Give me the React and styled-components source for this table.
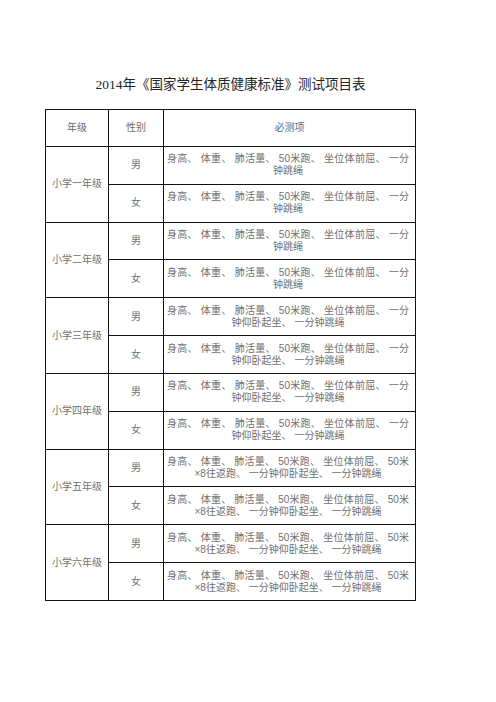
import React from "react";
import styled, { createGlobalStyle } from "styled-components";

const GlobalStyle = createGlobalStyle`
  html, body {
    margin: 0;
    padding: 0;
    background: #ffffff;
  }
  body {
    font-family: "Liberation Sans", "Noto Sans CJK SC", sans-serif;
  }
`;

const Page = styled.div`
  width: 496px;
  min-height: 702px;
  background: #ffffff;
  padding: 75px 0 0 45px;
  box-sizing: border-box;
`;

const Sheet = styled.div`
  width: 371px;
  display: flex;
  flex-direction: column;
  align-items: stretch;
`;

const Title = styled.h1`
  margin: 0 0 14px 0;
  height: 20px;
  line-height: 20px;
  font-size: 13.5px;
  font-weight: 400;
  text-align: center;
  color: #262626;
  font-family: "Liberation Serif", "Noto Sans CJK SC", serif;
  white-space: nowrap;
`;

const Table = styled.div`
  display: grid;
  grid-template-columns: 62px 54px 251px;
  grid-template-rows: 36px repeat(12, 36.83px);
  gap: 1px;
  background: #111111;
  border: 1px solid #111111;
`;

const Cell = styled.div`
  background: #ffffff;
  display: flex;
  align-items: center;
  justify-content: center;
  font-family: "Liberation Sans", "Noto Sans CJK SC", sans-serif;
  font-size: 10px;
  line-height: 12px;
  color: #707070;
  min-width: 0;
`;

const HeaderCell = styled(Cell)`
  color: ${(p) => (p.$accent ? "#4d6a96" : "#6a6a6a")};
`;

const GradeCell = styled(Cell)`
  grid-row: span 2;
`;

const GenderCell = styled(Cell)``;

const ItemsCell = styled(Cell)`
  flex-direction: column;
  align-items: stretch;
  padding: 0 6px 0 3px;
`;

const FirstLine = styled.span`
  display: block;
  height: 12px;
  text-align: justify;
  text-align-last: justify;
  white-space: nowrap;
`;

const SecondLine = styled.span`
  display: block;
  height: 12px;
  text-align: center;
  white-space: nowrap;
`;

const base = "身高、 体重、 肺活量、 50米跑、 坐位体前屈、 ";

const itemsByGrade = [
  [base + "一分", "钟跳绳"],
  [base + "一分", "钟跳绳"],
  [base + "一分", "钟仰卧起坐、 一分钟跳绳"],
  [base + "一分", "钟仰卧起坐、 一分钟跳绳"],
  [base + "50米", "×8往返跑、 一分钟仰卧起坐、 一分钟跳绳"],
  [base + "50米", "×8往返跑、 一分钟仰卧起坐、 一分钟跳绳"],
];

const grades = ["小学一年级", "小学二年级", "小学三年级", "小学四年级", "小学五年级", "小学六年级"];

export default function App() {
  return (
    <>
      <GlobalStyle />
      <Page>
        <Sheet>
          <Title>2014年《国家学生体质健康标准》测试项目表</Title>
          <Table>
            <HeaderCell>年级</HeaderCell>
            <HeaderCell>性别</HeaderCell>
            <HeaderCell $accent>必测项</HeaderCell>
            {grades.map((g, i) => (
              <React.Fragment key={g}>
                <GradeCell>{g}</GradeCell>
                <GenderCell>男</GenderCell>
                <ItemsCell>
                  <FirstLine>{itemsByGrade[i][0]}</FirstLine>
                  <SecondLine>{itemsByGrade[i][1]}</SecondLine>
                </ItemsCell>
                <GenderCell>女</GenderCell>
                <ItemsCell>
                  <FirstLine>{itemsByGrade[i][0]}</FirstLine>
                  <SecondLine>{itemsByGrade[i][1]}</SecondLine>
                </ItemsCell>
              </React.Fragment>
            ))}
          </Table>
        </Sheet>
      </Page>
    </>
  );
}
